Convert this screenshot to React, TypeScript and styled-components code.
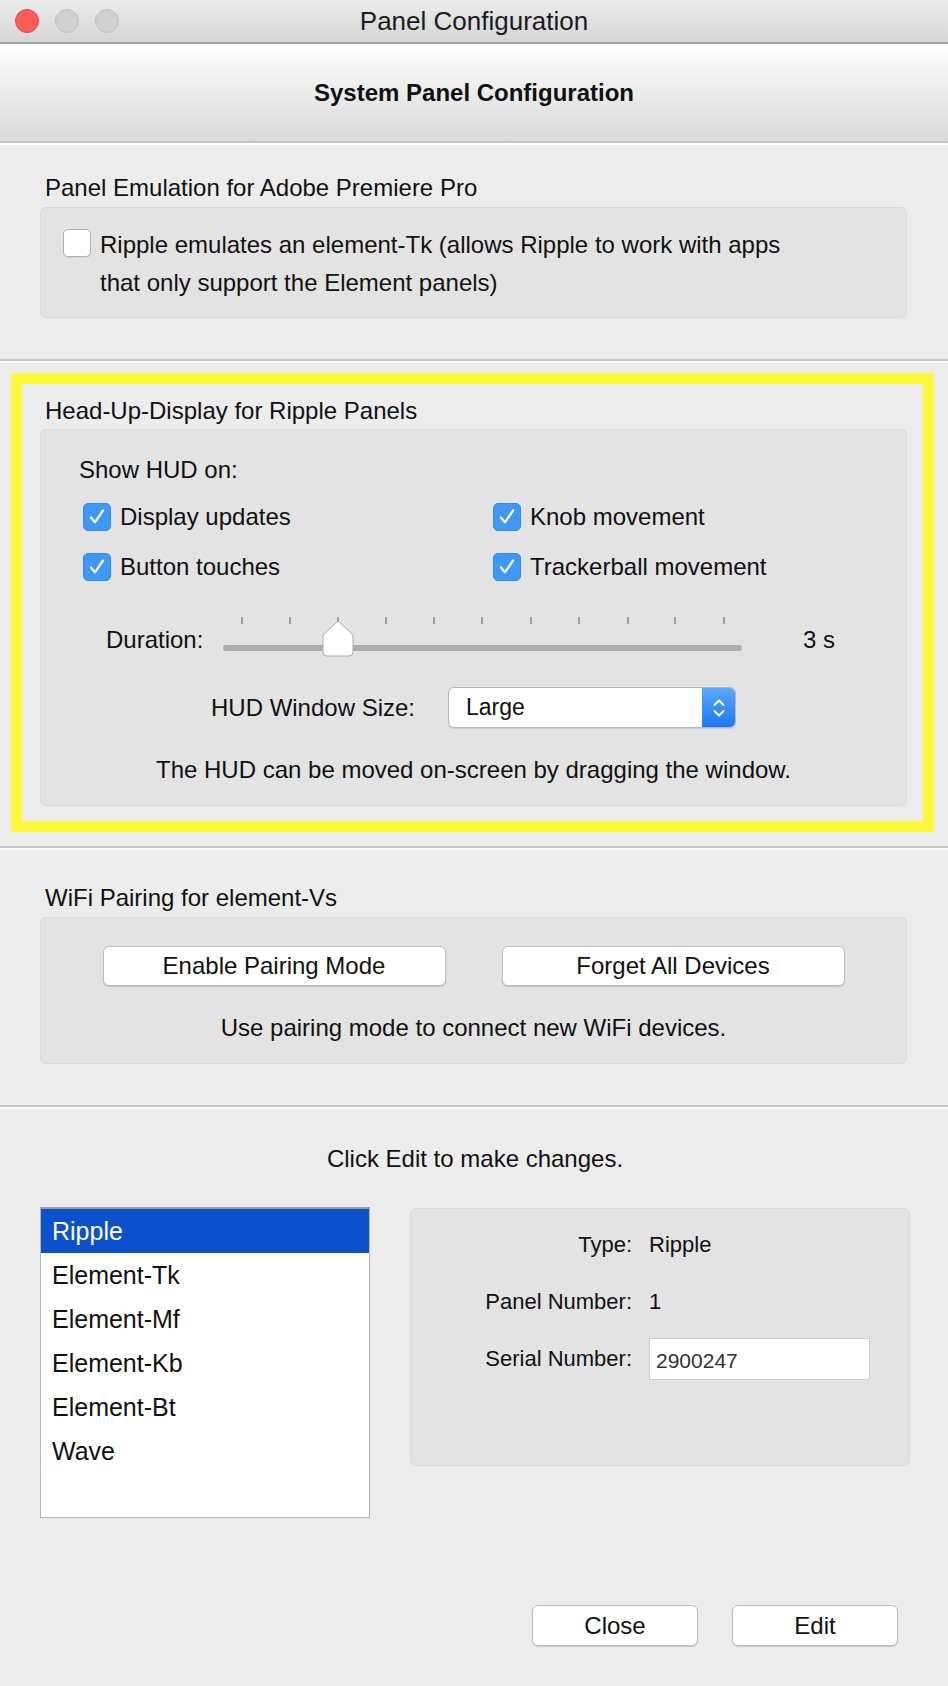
import React from "react";
import styled, { createGlobalStyle } from "styled-components";

const GlobalStyle = createGlobalStyle`
  html, body {
    margin: 0;
    padding: 0;
    background: #ececec;
  }
  body {
    font-family: "Liberation Sans", Arial, Helvetica, sans-serif;
    color: #111;
  }
  * { box-sizing: border-box; }
`;

const Window = styled.div`
  width: 948px;
  min-height: 1686px;
  background: #ececec;
  display: flex;
  flex-direction: column;
`;

const TitleBar = styled.div`
  height: 44px;
  background: linear-gradient(#ececec, #d5d5d5);
  border-bottom: 2px solid #a4a4a4;
  display: grid;
  grid-template-columns: 1fr auto 1fr;
  align-items: center;
`;

const Lights = styled.div`
  display: flex;
  gap: 16px;
  padding-left: 15px;
`;

const Light = styled.span<{ $fill: string; $rim: string }>`
  width: 24px;
  height: 24px;
  border-radius: 50%;
  background: ${(p) => p.$fill};
  border: 1px solid ${(p) => p.$rim};
`;

const WindowTitle = styled.div`
  font-size: 26px;
  line-height: 42px;
  color: #1c1c1c;
`;

const Header = styled.div`
  height: 97px;
  background: linear-gradient(#fefefe, #d9d9d9);
  display: flex;
  align-items: center;
  justify-content: center;
  font-size: 24px;
  font-weight: bold;
  color: #111;
`;

const Divider = styled.div`
  height: 4px;
  border-top: 2px solid #c6c6c6;
  border-bottom: 2px solid #fbfbfb;
`;

const Section = styled.div<{ $top: number; $bottom: number }>`
  padding: ${(p) => p.$top}px 41px ${(p) => p.$bottom}px 40px;
`;

const SectionLabel = styled.div`
  font-size: 24px;
  line-height: 28px;
  margin: 0 0 5px 5px;
`;

const GroupBox = styled.div<{ $pad: string }>`
  background: #e3e3e3;
  border: 1px solid #dadada;
  border-radius: 6px;
  padding: ${(p) => p.$pad};
`;

const HighlightFrame = styled.div`
  margin: 10px 14px 14px 11px;
  border: 11px solid #fcf83c;
  padding: 13px 16px 15px 18px;
  & > ${SectionLabel} {
    margin-bottom: 4px;
  }
`;

const CheckRow = styled.div`
  display: flex;
  align-items: flex-start;
  gap: 9px;
`;

const CheckSlot = styled.span`
  padding-top: 3px;
`;

const Box = styled.span<{ $checked?: boolean }>`
  flex: none;
  width: 28px;
  height: 28px;
  border-radius: 5px;
  display: inline-flex;
  align-items: center;
  justify-content: center;
  background: ${(p) => (p.$checked ? "#3f97f6" : "#ffffff")};
  border: 1px solid ${(p) => (p.$checked ? "#3589ec" : "#b2b2b2")};
  box-shadow: ${(p) => (p.$checked ? "none" : "0 1px 1px rgba(0,0,0,0.08)")};
`;

const WrapText = styled.div`
  font-size: 24px;
  line-height: 38px;
`;

const PlainText = styled.div`
  font-size: 24px;
  line-height: 28px;
`;

const CheckGrid = styled.div`
  display: grid;
  grid-template-columns: 410px auto;
  row-gap: 22px;
  margin: 19px 0 0 4px;
`;

const CheckItem = styled.label`
  display: flex;
  align-items: center;
  gap: 9px;
  font-size: 24px;
  line-height: 28px;
`;

const SliderRow = styled.div`
  display: flex;
  align-items: center;
  height: 40px;
  margin: 36px 0 0 27px;
`;

const SliderLabel = styled.div`
  width: 117px;
  font-size: 24px;
  line-height: 28px;
  padding-top: 6px;
`;

const SliderValue = styled(SliderLabel)`
  width: auto;
  margin-left: 61px;
`;

const Slider = styled.div`
  position: relative;
  width: 519px;
  height: 40px;
`;

const Tick = styled.span`
  position: absolute;
  top: 0;
  width: 2px;
  height: 7px;
  background: #9c9c9c;
`;

const Track = styled.div`
  position: absolute;
  left: 0;
  right: 0;
  top: 28px;
  height: 6px;
  border-radius: 3px;
  background: #adadad;
`;

const Thumb = styled.svg`
  position: absolute;
  top: 3px;
`;

const PopupRow = styled.div`
  display: flex;
  justify-content: center;
  align-items: center;
  gap: 33px;
  margin-top: 30px;
`;

const Popup = styled.div`
  width: 288px;
  height: 41px;
  display: flex;
  background: #fff;
  border: 1px solid #b6b6b6;
  border-radius: 6px;
  box-shadow: 0 1px 1px rgba(0, 0, 0, 0.12);
  overflow: hidden;
`;

const PopupText = styled.div`
  flex: 1;
  font-size: 23px;
  line-height: 39px;
  padding-left: 17px;
  color: #111;
`;

const PopupArrows = styled.div`
  width: 33px;
  display: flex;
  align-items: center;
  justify-content: center;
  background: linear-gradient(#5aa9fb, #1b78f4);
`;

const Note = styled.div`
  margin-top: 28px;
  text-align: center;
  font-size: 24px;
  line-height: 28px;
`;

const ButtonPair = styled.div`
  display: flex;
  justify-content: center;
  gap: 56px;
`;

const PushButton = styled.button<{ $w: number; $h: number }>`
  width: ${(p) => p.$w}px;
  height: ${(p) => p.$h}px;
  background: #fff;
  border: 1px solid #bdbdbd;
  border-radius: 6px;
  box-shadow: 0 1px 1px rgba(0, 0, 0, 0.15);
  font-family: inherit;
  font-size: 24px;
  color: #111;
  padding: 0;
`;

const BottomArea = styled.div`
  padding: 36px 38px 40px 40px;
`;

const Caption = styled.div`
  text-align: center;
  font-size: 24px;
  line-height: 28px;
`;

const ListRow = styled.div`
  display: flex;
  align-items: flex-start;
  gap: 40px;
  margin-top: 34px;
`;

const PanelList = styled.div`
  width: 330px;
  height: 311px;
  background: #fff;
  border: 1px solid #b4b4b4;
  border-top: 2px solid #9a9a9a;
`;

const ListItem = styled.div<{ $selected?: boolean }>`
  height: 44px;
  line-height: 44px;
  padding-left: 11px;
  font-size: 25px;
  background: ${(p) => (p.$selected ? "#0c51cc" : "transparent")};
  color: ${(p) => (p.$selected ? "#fff" : "#111")};
`;

const InfoBox = styled.div`
  width: 500px;
  height: 258px;
  margin-top: 1px;
  background: #e3e3e3;
  border: 1px solid #dadada;
  border-radius: 6px;
  padding-top: 7px;
`;

const InfoRow = styled.div`
  display: grid;
  grid-template-columns: 221px 1fr;
  column-gap: 17px;
  align-items: center;
  height: 57px;
`;

const InfoLabel = styled.div`
  text-align: right;
  font-size: 22px;
`;

const InfoValue = styled.div`
  font-size: 22px;
`;

const SerialField = styled.div`
  width: 221px;
  height: 42px;
  background: #fff;
  border: 1px solid #cbcbcb;
  display: flex;
  align-items: center;
  padding: 5px 0 0 6px;
  font-size: 21px;
  color: #333;
`;

const ButtonBar = styled.div`
  display: flex;
  justify-content: flex-end;
  gap: 34px;
  margin-top: 87px;
  padding-right: 12px;
`;

function Checkbox({ checked }: { checked?: boolean }) {
  return (
    <Box $checked={checked}>
      {checked && (
        <svg width="28" height="28" viewBox="0 0 28 28">
          <path
            d="M7.5 14.5 L11.8 19.8 L20.5 7"
            fill="none"
            stroke="#fff"
            strokeWidth="2.4"
            strokeLinecap="round"
            strokeLinejoin="round"
          />
        </svg>
      )}
    </Box>
  );
}

const tickPositions = [19, 67, 115, 163, 211, 259, 308, 356, 405, 452, 501];
const panels = ["Ripple", "Element-Tk", "Element-Mf", "Element-Kb", "Element-Bt", "Wave"];

export default function App() {
  const durationIndex = 2;

  return (
    <>
      <GlobalStyle />
      <Window>
        <TitleBar>
          <Lights>
            <Light $fill="#fc5d56" $rim="#de4741" />
            <Light $fill="#d0d0d0" $rim="#c2c2c2" />
            <Light $fill="#d0d0d0" $rim="#c2c2c2" />
          </Lights>
          <WindowTitle>Panel Configuration</WindowTitle>
          <div />
        </TitleBar>

        <Header>System Panel Configuration</Header>
        <Divider />

        <Section $top={29} $bottom={41}>
          <SectionLabel>Panel Emulation for Adobe Premiere Pro</SectionLabel>
          <GroupBox $pad="18px 20px 15px 22px">
            <CheckRow>
              <CheckSlot>
                <Checkbox />
              </CheckSlot>
              <WrapText>
                Ripple emulates an element-Tk (allows Ripple to work with apps
                <br />
                that only support the Element panels)
              </WrapText>
            </CheckRow>
          </GroupBox>
        </Section>
        <Divider />

        <HighlightFrame>
          <SectionLabel>Head-Up-Display for Ripple Panels</SectionLabel>
          <GroupBox $pad="26px 38px 21px 38px">
            <PlainText>Show HUD on:</PlainText>
            <CheckGrid>
              <CheckItem>
                <Checkbox checked />
                Display updates
              </CheckItem>
              <CheckItem>
                <Checkbox checked />
                Knob movement
              </CheckItem>
              <CheckItem>
                <Checkbox checked />
                Button touches
              </CheckItem>
              <CheckItem>
                <Checkbox checked />
                Trackerball movement
              </CheckItem>
            </CheckGrid>

            <SliderRow>
              <SliderLabel>Duration:</SliderLabel>
              <Slider>
                {tickPositions.map((x) => (
                  <Tick key={x} style={{ left: x - 1 }} />
                ))}
                <Track />
                <Thumb
                  width="32"
                  height="37"
                  viewBox="0 0 32 37"
                  style={{ left: tickPositions[durationIndex] - 16 }}
                >
                  <path
                    d="M16 1 L29.5 13.5 Q31 15 31 17.5 L31 32 Q31 36 27 36 L5 36 Q1 36 1 32 L1 17.5 Q1 15 2.5 13.5 Z"
                    fill="#ffffff"
                    stroke="#ababab"
                    strokeWidth="1"
                  />
                </Thumb>
              </Slider>
              <SliderValue>3 s</SliderValue>
            </SliderRow>

            <PopupRow>
              <PlainText>HUD Window Size:</PlainText>
              <Popup>
                <PopupText>Large</PopupText>
                <PopupArrows>
                  <svg width="14" height="24" viewBox="0 0 14 24">
                    <path
                      d="M2.5 9 L7 4.5 L11.5 9 M2.5 15 L7 19.5 L11.5 15"
                      fill="none"
                      stroke="#fff"
                      strokeWidth="2"
                      strokeLinecap="round"
                      strokeLinejoin="round"
                    />
                  </svg>
                </PopupArrows>
              </Popup>
            </PopupRow>

            <Note>The HUD can be moved on-screen by dragging the window.</Note>
          </GroupBox>
        </HighlightFrame>
        <Divider />

        <Section $top={34} $bottom={41}>
          <SectionLabel>WiFi Pairing for element-Vs</SectionLabel>
          <GroupBox $pad="28px 20px 21px 20px">
            <ButtonPair>
              <PushButton $w={343} $h={40}>Enable Pairing Mode</PushButton>
              <PushButton $w={343} $h={40}>Forget All Devices</PushButton>
            </ButtonPair>
            <Note>Use pairing mode to connect new WiFi devices.</Note>
          </GroupBox>
        </Section>
        <Divider />

        <BottomArea>
          <Caption>Click Edit to make changes.</Caption>
          <ListRow>
            <PanelList>
              {panels.map((name, i) => (
                <ListItem key={name} $selected={i === 0}>
                  {name}
                </ListItem>
              ))}
            </PanelList>
            <InfoBox>
              <InfoRow>
                <InfoLabel>Type:</InfoLabel>
                <InfoValue>Ripple</InfoValue>
              </InfoRow>
              <InfoRow>
                <InfoLabel>Panel Number:</InfoLabel>
                <InfoValue>1</InfoValue>
              </InfoRow>
              <InfoRow>
                <InfoLabel>Serial Number:</InfoLabel>
                <SerialField>2900247</SerialField>
              </InfoRow>
            </InfoBox>
          </ListRow>
          <ButtonBar>
            <PushButton $w={166} $h={41}>Close</PushButton>
            <PushButton $w={166} $h={41}>Edit</PushButton>
          </ButtonBar>
        </BottomArea>
      </Window>
    </>
  );
}
